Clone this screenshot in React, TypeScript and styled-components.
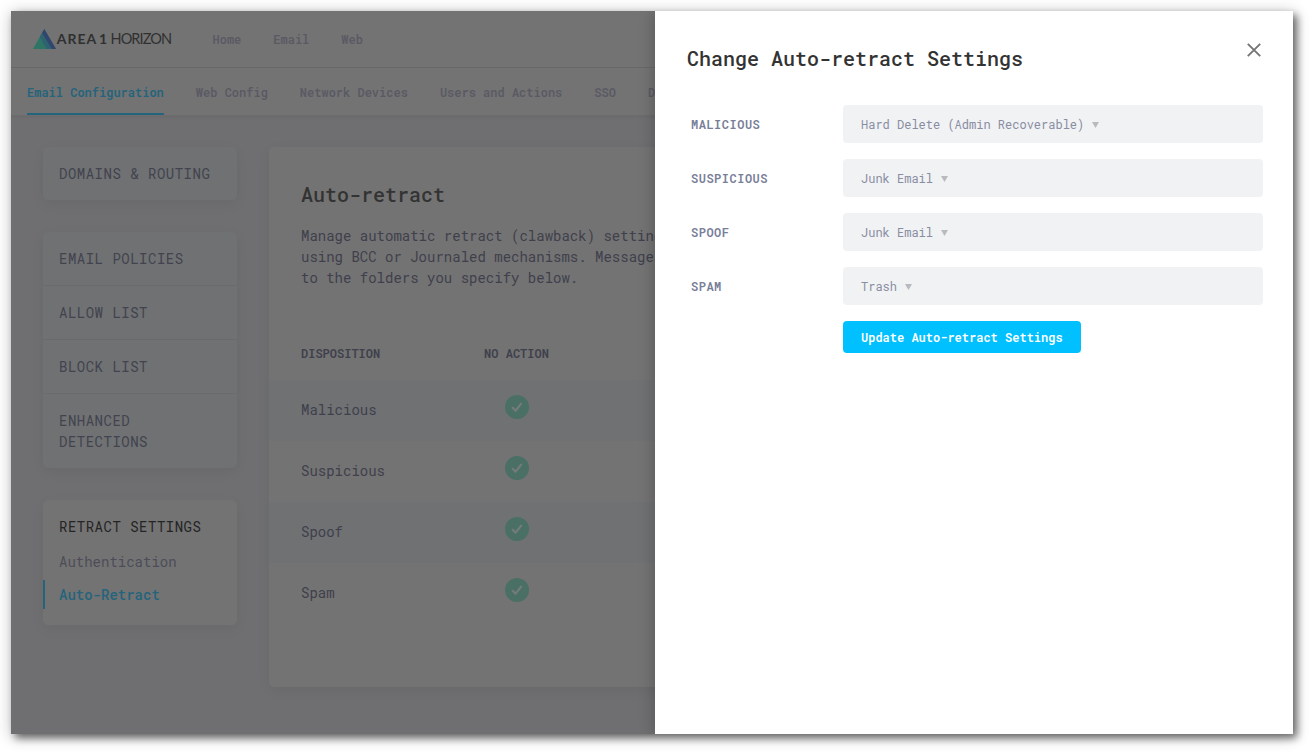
import React from "react";
import styled, { createGlobalStyle, css } from "styled-components";

const Global = createGlobalStyle`
  * { box-sizing: border-box; }
  body { margin: 0; background: #fff; overflow: hidden; -webkit-font-smoothing: antialiased; }
  h1, h2, p, ul { margin: 0; padding: 0; }
  button { font: inherit; border: 0; padding: 0; background: none; }
`;

const medium = css`
  font-weight: 500;
`;

const strong = css`
  font-weight: 600;
`;

const Stage = styled.div`
  height: 753px;
  padding: 11px 19px 19px 11px;
  font-family: "Roboto Mono", "Liberation Mono", monospace;
`;

const Window = styled.div`
  position: relative;
  height: 723px;
  background: #6f6f71;
  box-shadow: 4px 4px 8px rgba(0, 0, 0, 0.55), 0 2px 16px rgba(0, 0, 0, 0.22);
`;

const Page = styled.div`
  height: 100%;
  overflow: hidden;
`;

const Header = styled.header`
  display: flex;
  align-items: center;
  height: 57px;
  padding-left: 22px;
  background: #737373;
  border-bottom: 1px solid #696969;
`;

const Logo = styled.svg`
  width: 142px;
  height: 24px;
  margin-right: 37.5px;
  flex: none;
`;

const TopNav = styled.nav`
  display: flex;
  gap: 32px;
  font-size: 12px;
  line-height: 18px;
  color: #5a5a64;
  ${strong}
`;

const TabBar = styled.nav`
  display: flex;
  gap: 32px;
  height: 48px;
  padding-left: 16px;
  background: #737373;
  border-bottom: 1px solid #6c6c6c;
  box-shadow: 0 1px 3px rgba(0, 0, 0, 0.06);
`;

const Tab = styled.span<{ $active?: boolean }>`
  height: 47px;
  white-space: nowrap;
  font-size: 12px;
  line-height: 48px;
  color: ${(p) => (p.$active ? "#24647c" : "#5a5a64")};
  border-bottom: ${(p) => (p.$active ? "2px solid #24647c" : "0")};
  ${strong}
`;

const Body = styled.div`
  display: flex;
  gap: 32px;
  padding: 31px 32px;
`;

const Sidebar = styled.aside`
  display: flex;
  flex-direction: column;
  gap: 32px;
  width: 194px;
  flex: none;
`;

const Group = styled.div<{ $open?: boolean }>`
  background: ${(p) => (p.$open ? "#737373" : "#6f7173")};
  border-radius: 5px;
  box-shadow: 0 4px 14px rgba(0, 0, 0, 0.05);
  ${(p) => p.$open && "height: 125px; padding-top: 16px;"}
`;

const SideItem = styled.div`
  padding: 16px;
  font-size: 14px;
  line-height: 21px;
  letter-spacing: 0.5px;
  color: #42434e;
  & + & { border-top: 1px solid #6a6b6e; }
`;

const GroupTitle = styled.div`
  padding: 0 16px;
  font-size: 14px;
  line-height: 21px;
  letter-spacing: 0.5px;
  color: #242424;
`;

const SubItem = styled.div<{ $active?: boolean }>`
  height: 29px;
  margin-top: ${(p) => (p.$active ? "4px" : "10px")};
  padding-left: ${(p) => (p.$active ? "14px" : "16px")};
  border-left: ${(p) => (p.$active ? "2px solid #24647c" : "0")};
  font-size: 14px;
  line-height: 30px;
  color: ${(p) => (p.$active ? "#24647c" : "#4c4d58")};
  ${(p) => p.$active && medium}
`;

const Card = styled.main`
  flex: 1;
  height: 540px;
  background: #737373;
  border-radius: 5px;
  box-shadow: 0 4px 14px rgba(0, 0, 0, 0.05);
`;

const CardTitle = styled.h2`
  padding: 31px 32px 0;
  font-size: 20px;
  line-height: 32px;
  color: #333;
  ${medium}
`;

const Lead = styled.p`
  padding: 15px 32px 0;
  font-size: 14px;
  line-height: 21px;
  color: #3f404c;
  white-space: pre;
`;

const Row = styled.div<{ $striped?: boolean }>`
  display: grid;
  grid-template-columns: 168px 95px 1fr;
  height: 61px;
  padding-left: 32px;
  background: ${(p) => (p.$striped ? "#6f7173" : "transparent")};
  font-size: 14px;
  line-height: 60px;
  color: #3f404c;
`;

const HeadRow = styled(Row)`
  height: 53px;
  margin-top: 39px;
  font-size: 12px;
  line-height: 53px;
  ${strong}
`;

const Centered = styled.span`
  text-align: center;
`;

const Tick = styled.svg`
  display: block;
  width: 24px;
  height: 24px;
  margin: 15px 0 0 36px;
`;

const Drawer = styled.section`
  position: absolute;
  top: 0;
  right: 0;
  bottom: 0;
  width: 638px;
  padding: 31px 30px 0 32px;
  background: #fff;
  box-shadow: -2px 0 14px rgba(0, 0, 0, 0.2);
  clip-path: inset(0 0 0 -24px);
`;

const DrawerHead = styled.div`
  display: flex;
  justify-content: space-between;
  height: 63px;
`;

const DrawerTitle = styled.h1`
  font-size: 20px;
  line-height: 32px;
  color: #333;
  ${medium}
`;

const Close = styled.button`
  width: 14px;
  height: 14px;
  margin: 1px 2px 0 0;
  svg { display: block; }
`;

const Form = styled.div`
  display: flex;
  flex-direction: column;
  gap: 16px;
`;

const Field = styled.label`
  display: grid;
  grid-template-columns: 152px 420px;
  align-items: center;
  padding-left: 4px;
`;

const FieldName = styled.span`
  font-size: 12px;
  line-height: 18px;
  letter-spacing: 0.5px;
  color: #787e98;
  ${strong}
`;

const Select = styled.span`
  display: flex;
  align-items: center;
  gap: 8px;
  height: 38px;
  padding: 0 18px;
  border-radius: 4px;
  background: #f1f2f4;
  font-size: 12px;
  line-height: 18px;
  color: #888da2;
`;

const Caret = styled.svg`
  width: 7px;
  height: 6px;
  margin-top: 1px;
`;

const Submit = styled.button`
  align-self: flex-start;
  height: 32px;
  margin-left: 156px;
  padding: 0 18px;
  border-radius: 4px;
  background: #00c0ff;
  color: #fff;
  font-size: 12px;
  line-height: 32px;
  ${strong}
`;

const tabs = ["Email Configuration", "Web Config", "Network Devices", "Users and Actions", "SSO", "Directories"];
const policies = ["EMAIL POLICIES", "ALLOW LIST", "BLOCK LIST", "ENHANCED DETECTIONS"];
const dispositions = ["Malicious", "Suspicious", "Spoof", "Spam"];
const fields = [
  ["MALICIOUS", "Hard Delete (Admin Recoverable)"],
  ["SUSPICIOUS", "Junk Email"],
  ["SPOOF", "Junk Email"],
  ["SPAM", "Trash"],
];

export default function App() {
  return (
    <Stage>
      <Global />
      <Window>
        <Page>
          <Header>
            <Logo viewBox="0 0 142 24">
              <path d="M11.3 2L23 22H0z" fill="#2f7565" />
              <path d="M11.3 2L23 22H18.5L9 6z" fill="#32456f" />
              <path d="M9 6L18.5 22H13.5L6.8 10z" fill="#2e6270" />
              <g fontFamily="Lato, sans-serif" fontSize="14" fill="#303030">
                <text x="23.8" y="17" fontWeight="700" textLength="39.5">AREA</text>
                <text x="66" y="17" fontWeight="700">1</text>
                <text x="77.5" y="17" fontSize="14.5" textLength="61.5">HORIZON</text>
              </g>
            </Logo>
            <TopNav>
              <span>Home</span>
              <span>Email</span>
              <span>Web</span>
            </TopNav>
          </Header>
          <TabBar>
            {tabs.map((t, i) => (
              <Tab key={t} $active={i === 0}>{t}</Tab>
            ))}
          </TabBar>
          <Body>
            <Sidebar>
              <Group>
                <SideItem>DOMAINS &amp; ROUTING</SideItem>
              </Group>
              <Group>
                {policies.map((p) => (
                  <SideItem key={p}>{p}</SideItem>
                ))}
              </Group>
              <Group $open>
                <GroupTitle>RETRACT SETTINGS</GroupTitle>
                <SubItem>Authentication</SubItem>
                <SubItem $active>Auto-Retract</SubItem>
              </Group>
            </Sidebar>
            <Card>
              <CardTitle>Auto-retract</CardTitle>
              <Lead>{"Manage automatic retract (clawback) settings\nusing BCC or Journaled mechanisms. Messages\nto the folders you specify below."}</Lead>
              <HeadRow>
                <span>DISPOSITION</span>
                <Centered>NO ACTION</Centered>
              </HeadRow>
              {dispositions.map((d, i) => (
                <Row key={d} $striped={i % 2 === 0}>
                  <span>{d}</span>
                  <Tick viewBox="0 0 24 24">
                    <circle cx="12" cy="12" r="12" fill="#4a7066" />
                    <path d="M7.7 12.8l2.9 2.9 5.6-7" fill="none" stroke="#757b79" strokeWidth="2.1" strokeLinecap="round" strokeLinejoin="round" />
                  </Tick>
                </Row>
              ))}
            </Card>
          </Body>
        </Page>
        <Drawer>
          <DrawerHead>
            <DrawerTitle>Change Auto-retract Settings</DrawerTitle>
            <Close aria-label="Close">
              <svg width="14" height="14" viewBox="0 0 14 14">
                <path d="M0.8 0.8l12.4 12.4M13.2 0.8L0.8 13.2" stroke="#757575" strokeWidth="1.9" />
              </svg>
            </Close>
          </DrawerHead>
          <Form>
            {fields.map(([name, value]) => (
              <Field key={name}>
                <FieldName>{name}</FieldName>
                <Select>
                  <span>{value}</span>
                  <Caret viewBox="0 0 7 6">
                    <path d="M0 0h7L3.5 6z" fill="#b9babd" />
                  </Caret>
                </Select>
              </Field>
            ))}
            <Submit>Update Auto-retract Settings</Submit>
          </Form>
        </Drawer>
      </Window>
    </Stage>
  );
}
